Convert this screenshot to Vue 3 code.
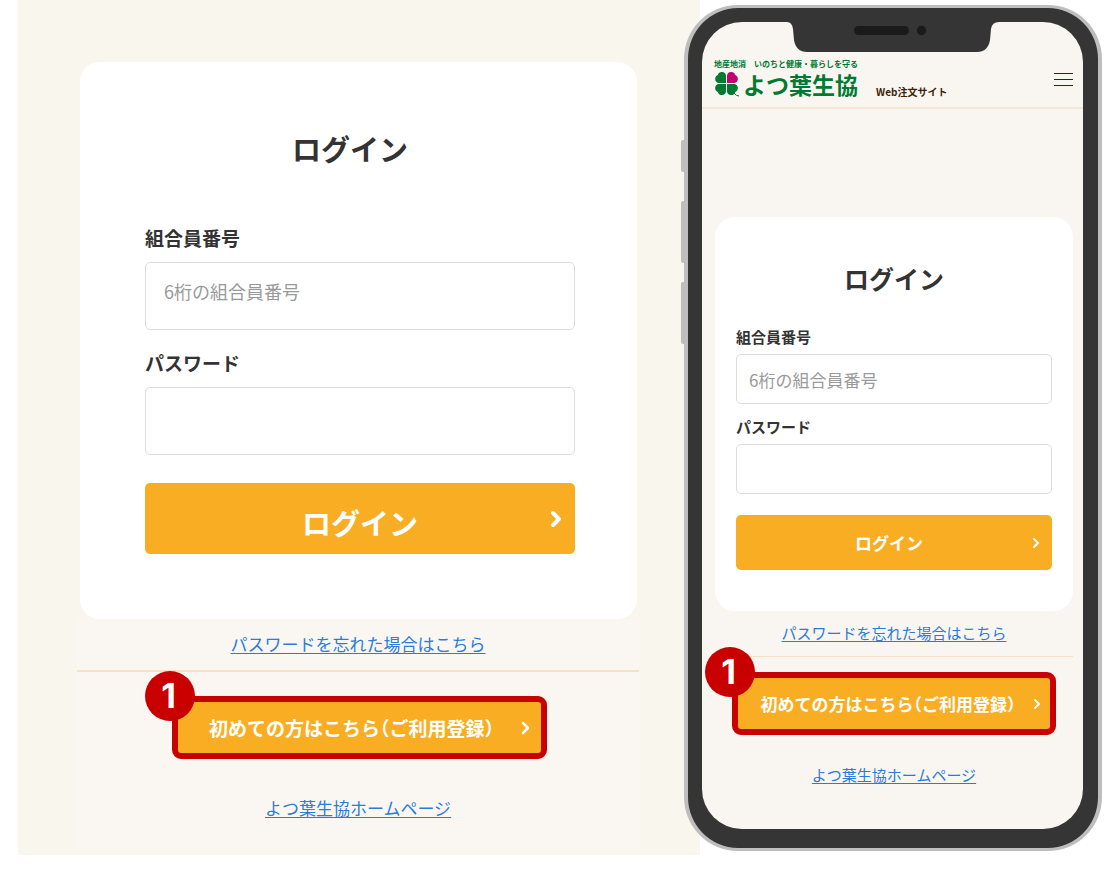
<script setup>
import { ref } from 'vue'

const wideMember = ref('')
const widePassword = ref('')
const phoneMember = ref('')
const phonePassword = ref('')
</script>

<template>
  <main class="page">
    <section class="panel">
      <form class="card" @submit.prevent>
        <h1 class="title">ログイン</h1>
        <div class="field">
          <label for="wide-member">組合員番号</label>
          <input id="wide-member" v-model="wideMember" class="upper" type="text" placeholder="6桁の組合員番号" />
        </div>
        <div class="field">
          <label for="wide-password">パスワード</label>
          <input id="wide-password" v-model="widePassword" type="password" />
        </div>
        <button class="login" type="submit">
          <span>ログイン</span>
          <svg class="chevron" width="12" height="18" viewBox="0 0 12 18"><path d="M3 3l6 6-6 6" stroke-width="4" /></svg>
        </button>
      </form>
      <div class="links">
        <a class="forgot" href="#">パスワードを忘れた場合はこちら</a>
        <div class="callout">
          <button class="register" type="button">
            <span>初めての方はこちら（ご利用登録）</span>
            <svg class="chevron" width="10" height="14" viewBox="0 0 10 14"><path d="M3 2l5 5-5 5" stroke-width="2.500" /></svg>
          </button>
          <span class="badge">1</span>
        </div>
        <a class="home" href="#">よつ葉生協ホームページ</a>
      </div>
    </section>

    <section class="phone">
      <i class="key silent"></i>
      <i class="key up"></i>
      <i class="key down"></i>
      <div class="screen">
        <svg class="notch" width="212" height="31" viewBox="0 0 212 31">
          <path d="M0 0H212Q205 0 204 7L203 18Q201 30 190 30H20Q9 30 7 18L6 7Q5 0 0 0Z" fill="#353535" />
          <rect x="67" y="4" width="55" height="9" rx="4.500" fill="#1a1a1a" />
          <circle cx="134.500" cy="8.500" r="4.700" fill="#1a1a1a" />
        </svg>
        <header class="header">
          <div class="brand">
            <span class="tagline">地産地消　いのちと健康・暮らしを守る</span>
            <div class="name-row">
              <svg class="clover" width="26" height="26" viewBox="0 0 26 26">
                <g fill="#007a33">
                  <path d="M12 12H4.500A4.200 4.200 0 0 1 3.800 4A4.200 4.200 0 0 1 12 4.500Z" />
                  <path d="M12 13H4.500A4.200 4.200 0 0 0 3.800 21A4.200 4.200 0 0 0 12 20.500Z" />
                  <path d="M13 13H20.500A4.200 4.200 0 0 1 21.200 21A4.200 4.200 0 0 1 13 20.500Z" />
                </g>
                <path d="M13 12H20.500A4.200 4.200 0 0 0 21.200 4A4.200 4.200 0 0 0 13 4.500Z" fill="#c4006e" />
                <path d="M20 22Q22 25 25 25" fill="none" stroke="#007a33" stroke-width="1" />
              </svg>
              <strong>よつ葉生協</strong>
            </div>
          </div>
          <span class="site">Web注文サイト</span>
          <button class="menu" type="button" aria-label="メニュー"><i></i><i></i><i></i></button>
        </header>
        <form class="card" @submit.prevent>
          <h2 class="title">ログイン</h2>
          <div class="field">
            <label for="phone-member">組合員番号</label>
            <input id="phone-member" v-model="phoneMember" type="text" placeholder="6桁の組合員番号" />
          </div>
          <div class="field">
            <label for="phone-password">パスワード</label>
            <input id="phone-password" v-model="phonePassword" type="password" />
          </div>
          <button class="login" type="submit">
            <span>ログイン</span>
            <svg class="chevron" width="8" height="12" viewBox="0 0 8 12"><path d="M2 2l4 4-4 4" stroke-width="2" /></svg>
          </button>
        </form>
        <div class="links">
          <a class="forgot" href="#">パスワードを忘れた場合はこちら</a>
          <div class="callout">
            <button class="register" type="button">
              <span>初めての方はこちら（ご利用登録）</span>
              <svg class="chevron" width="8" height="12" viewBox="0 0 8 12"><path d="M2 2l4 4-4 4" stroke-width="2" /></svg>
            </button>
            <span class="badge">1</span>
          </div>
          <a class="home" href="#">よつ葉生協ホームページ</a>
        </div>
      </div>
    </section>
  </main>
</template>

<style>
body {
  margin: 0;
  background: #fff;
}
</style>

<style scoped>
* {
  box-sizing: border-box;
}
.page {
  display: grid;
  grid-template-columns: minmax(0, 682fr) minmax(0, 402fr);
  align-items: start;
  padding: 0 8px 23px 18px;
  color: #333;
  font-family: "Noto Sans CJK JP", sans-serif;
}
button,
input {
  font-family: inherit;
}
.panel {
  padding: 62px 61px 7px 59px;
  background: #f9f6ee;
}
.card {
  display: flex;
  flex-direction: column;
  border-radius: 20px;
  background: #fff;
}
.panel .card {
  margin: 0 2px 0 3px;
  padding: 66px 62px 65px 65px;
}
.title {
  margin: 0 20px 56px 0;
  font-size: 29px;
  line-height: 40px;
  text-align: center;
}
.field {
  display: flex;
  flex-direction: column;
  gap: 10px;
  margin-bottom: 19px;
}
.field label {
  font-size: 19px;
  font-weight: 700;
  line-height: 28px;
}
.field input {
  width: 100%;
  height: 68px;
  padding: 0 18px;
  border: 1px solid #dcdcdc;
  border-radius: 5px;
  background: #fff;
  color: #333;
  font-size: 18px;
}
.field input.upper {
  padding-bottom: 10px;
}
.field input::placeholder {
  color: #999;
  opacity: 1;
}
.login,
.register {
  position: relative;
  display: flex;
  align-items: center;
  justify-content: center;
  width: 100%;
  background: #f9ad22;
  color: #fff;
  font-weight: 700;
}
.login {
  height: 71px;
  margin-top: 9px;
  padding: 6px 0 0;
  border: 0;
  border-radius: 5px;
  font-size: 29px;
}
.chevron {
  position: absolute;
  fill: none;
  stroke: #fff;
  stroke-linecap: round;
  stroke-linejoin: round;
}
.login .chevron {
  top: 27px;
  right: 13px;
}
.links {
  display: flex;
  flex-direction: column;
  align-items: center;
  padding: 12px 0 27px;
  background: #faf7f2;
}
.links a {
  color: #2b7bd9;
  font-size: 17px;
  line-height: 26px;
  text-decoration: underline;
  text-underline-offset: 2px;
}
.callout {
  position: relative;
  align-self: stretch;
  margin: 13px 0 36px;
  padding: 24px 92px 0 95px;
  border-top: 2px solid #f6e1c5;
}
.register {
  height: 63px;
  padding: 0 16px 0 0;
  border: 6px solid #c80000;
  border-radius: 9px;
  font-size: 19px;
  font-feature-settings: "halt";
  white-space: nowrap;
}
.register .chevron {
  right: 11px;
}
.badge {
  position: absolute;
  top: -1px;
  left: 68px;
  display: flex;
  align-items: center;
  justify-content: center;
  width: 50px;
  height: 50px;
  padding-right: 3px;
  border-radius: 50%;
  background: #c80000;
  color: #fff;
  font: 700 34px/50px Inter, sans-serif;
}

.phone {
  position: relative;
  margin: 5px 0 0 -16px;
  padding: 14px 15px 19px 14px;
  border: solid #bebebe;
  border-width: 3px 4px;
  border-radius: 54px;
  background: #353535;
}
.key {
  position: absolute;
  left: -7px;
  width: 3px;
  border-radius: 2px 0 0 2px;
  background: #bebebe;
}
.silent {
  top: 132px;
  height: 32px;
}
.up {
  top: 193px;
  height: 62px;
}
.down {
  top: 274px;
  height: 62px;
}
.screen {
  position: relative;
  padding-bottom: 43px;
  border-radius: 40px;
  background: #f9f6f1;
}
.notch {
  position: absolute;
  top: 0;
  left: 50%;
  margin-left: -106px;
}
.header {
  display: flex;
  align-items: flex-end;
  padding: 36px 10px 7px 12px;
  border-bottom: 2px solid #f6e6d2;
}
.brand {
  display: flex;
  flex-direction: column;
  padding-bottom: 2px;
  color: #007a33;
  white-space: nowrap;
}
.tagline {
  font-size: 8px;
  font-weight: 700;
  line-height: 12px;
}
.name-row {
  display: flex;
  align-items: center;
  gap: 3px;
}
.name-row strong {
  font-size: 23px;
  line-height: 28px;
}
.site {
  margin-left: 18px;
  color: #401e0c;
  font-size: 10px;
  font-weight: 700;
  line-height: 16px;
  white-space: nowrap;
}
.menu {
  display: flex;
  flex-direction: column;
  gap: 5px;
  width: 19px;
  margin: 0 0 14px auto;
  padding: 0;
  border: 0;
  background: none;
}
.menu i {
  width: 100%;
  height: 1px;
  background: #401e0c;
}
.screen .card {
  margin: 108px 10px 0 13px;
  padding: 44px 21px 41px;
}
.screen .title {
  margin: 0 0 31px;
  font-size: 25px;
  line-height: 34px;
}
.screen .field {
  gap: 6px;
  margin-bottom: 12px;
}
.screen .field label {
  font-size: 15px;
  line-height: 22px;
}
.screen .field input {
  height: 50px;
  padding: 0 12px;
  font-size: 17px;
}
.screen .login {
  height: 55px;
  margin-top: 9px;
  padding: 0 10px 0 0;
  font-size: 17px;
}
.screen .login .chevron {
  top: 22px;
  right: 12px;
}
.screen .links {
  margin: 0 10px 0 13px;
  padding: 11px 0 0;
  background: none;
}
.screen .links a {
  font-size: 15px;
  line-height: 22px;
}
.screen .callout {
  margin: 12px 0 29px;
  padding: 15px 17px 0;
  border-top-width: 1px;
}
.screen .register {
  padding-right: 12px;
  font-size: 17px;
}
.screen .register .chevron {
  right: 9px;
}
.screen .badge {
  top: -10px;
  left: -10px;
}
</style>
